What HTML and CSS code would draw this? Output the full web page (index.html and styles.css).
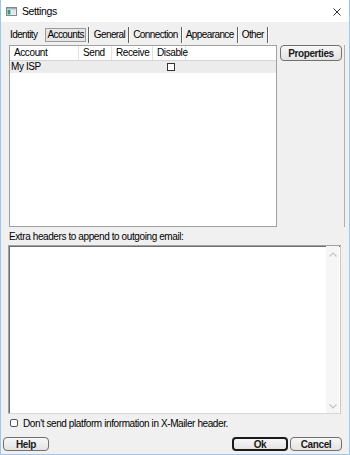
FILE: index.html
```html
<!DOCTYPE html>
<html lang="en">
<head>
  <meta charset="UTF-8" />
  <title>Settings</title>
  <link rel="stylesheet" href="styles.css">
</head>
<body>

<div class="window">
  <!-- Title bar -->
  <div class="titlebar">
    <svg class="app-icon" width="11" height="9" viewBox="0 0 11 9">
      <rect x="0.5" y="0.5" width="10" height="8" fill="#f4f6f8" stroke="#7d8a94"/>
      <rect x="1" y="1" width="9" height="1.5" fill="#9fb1bf"/>
      <rect x="1.5" y="3" width="3" height="4.5" fill="#3c9a72"/>
      <rect x="5.5" y="3" width="4" height="4.5" fill="#dfe6ea"/>
    </svg>
    <span class="title">Settings</span>
    <svg class="close" width="8" height="8" viewBox="0 0 8 8">
      <path d="M0.5 0.5 L7.5 7.5 M7.5 0.5 L0.5 7.5" stroke="#333333" stroke-width="1"/>
    </svg>
  </div>

  <div class="client">
    <!-- Tabs -->
    <div class="tabs">
      <span class="tab plain">Identity</span>
      <span class="tab active">Accounts</span>
      <span class="tab">General</span>
      <span class="tab">Connection</span>
      <span class="tab">Appearance</span>
      <span class="tab">Other</span>
    </div>

    <!-- Accounts -->
    <div class="accounts">
      <div class="listbox">
        <div class="list-head">
          <span class="col col-account">Account</span>
          <span class="col col-send">Send</span>
          <span class="col col-receive">Receive</span>
          <span class="col col-disable">Disable</span>
        </div>
        <div class="list-row">
          <span class="col col-account">My ISP</span>
          <span class="col col-send"></span>
          <span class="col col-receive"></span>
          <span class="col col-disable"><span class="check"></span></span>
        </div>
      </div>
      <div class="side">
        <button class="btn btn-props">Properties</button>
      </div>
    </div>

    <div class="label">Extra headers to append to outgoing email:</div>
    <div class="memo">
      <div class="memo-text"></div>
      <div class="scrollbar">
        <svg width="8" height="5" viewBox="0 0 8 5"><path d="M0.5 4.5 L4 1 L7.5 4.5" fill="none" stroke="#c4c4c4" stroke-width="1.2"/></svg>
        <svg width="8" height="5" viewBox="0 0 8 5"><path d="M0.5 0.5 L4 4 L7.5 0.5" fill="none" stroke="#c4c4c4" stroke-width="1.2"/></svg>
      </div>
    </div>

    <label class="option">
      <span class="option-box"></span>
      Don't send platform information in X-Mailer header.
    </label>

    <div class="buttons">
      <button class="btn btn-help">Help</button>
      <span class="spacer"></span>
      <button class="btn btn-ok">Ok</button>
      <button class="btn btn-cancel">Cancel</button>
    </div>
  </div>
</div>

</body>
</html>
```

FILE: styles.css
```css
/* General */
body {
  margin: 0;
  font-family: "Liberation Sans", Arial, sans-serif;
  font-size: 10px;
  letter-spacing: -0.4px;
  color: #000000;
  background-color: #ffffff;
}

.window {
  width: 350px;
  height: 455px;
  box-sizing: border-box;
  border: 1px solid #9ec5ea;
  border-top: none;
  display: flex;
  flex-direction: column;
  background-color: #f0f0f0;
}

/* Title bar */
.titlebar {
  height: 22px;
  background-color: #ffffff;
  display: flex;
  align-items: center;
  padding: 0 8px 0 5px;
  flex-shrink: 0;
}

.app-icon {
  margin-right: 5px;
  margin-top: 1px;
}

.title {
  font-size: 10.5px;
  letter-spacing: -0.4px;
  flex: 1;
}

.close {
  margin-top: 2px;
}

/* Client area */
.client {
  flex: 1;
  display: flex;
  flex-direction: column;
  padding: 0 7px 0 2px;
}

/* Tabs */
.tabs {
  display: flex;
  height: 16px;
  margin-top: 5px;
  align-items: center;
  padding-left: 7px;
  letter-spacing: -0.6px;
}

.tab {
  height: 16px;
  line-height: 15px;
  padding-right: 3px;
  margin-right: 4px;
  border-right: 1px solid #5f5f5f;
  box-shadow: 1px 0 0 #ffffff;
  box-sizing: border-box;
}

.tab.plain {
  border-right: none;
  box-shadow: none;
  margin-right: 5px;
}

.tab.active {
  height: 14px;
  line-height: 12px;
  padding-left: 1px;
  padding-right: 1px;
  margin-right: 8px;
  border: 1px solid #9b9b9b;
  background-color: #e6e6e6;
  box-shadow: none;
  position: relative;
}

.tab.active::after {
  content: "";
  position: absolute;
  right: -4px;
  top: -2px;
  height: 16px;
  border-right: 1px solid #5f5f5f;
  box-shadow: 1px 0 0 #ffffff;
}

/* Accounts list */
.accounts {
  display: flex;
  height: 182px;
  margin-top: 2px;
  margin-right: -3px;
  padding-left: 6px;
}

.listbox {
  width: 268px;
  background-color: #ffffff;
  border: 1px solid #a0a0a0;
  box-sizing: border-box;
}

.list-head,
.list-row {
  display: flex;
}

.list-head {
  height: 15px;
  line-height: 14px;
  border-bottom: 1px solid #d5d5d5;
  box-sizing: border-box;
}

.list-head .col {
  border-right: 1px solid #e0e0e0;
  padding-left: 4px;
}

.list-row {
  height: 12px;
  line-height: 12px;
  background-color: #ececec;
}

.list-row .col-account {
  padding-left: 1px;
}

.col {
  box-sizing: border-box;
  flex-shrink: 0;
}

.col-account { width: 69px; }
.col-send { width: 33px; }
.col-receive { width: 41px; }
.col-disable { width: 33px; }

.list-row .col-disable {
  text-align: center;
}

.check {
  display: inline-block;
  width: 6px;
  height: 6px;
  border: 1px solid #333333;
  background-color: #ffffff;
  vertical-align: -1px;
  margin-left: 3px;
}

.side {
  width: 62px;
  margin-left: 3px;
  padding-right: 2px;
  border-right: 1px solid #b0b0b0;
}

/* Buttons */
.btn {
  font-family: "Liberation Sans", Arial, sans-serif;
  font-size: 10px;
  letter-spacing: -0.4px;
  font-weight: bold;
  background: linear-gradient(#f7f7f7, #e3e3e3);
  border: 1px solid #6f6f6f;
  border-radius: 4px;
  height: 14px;
  padding: 0;
  line-height: 11px;
  color: #1a1a1a;
}

.btn-props {
  width: 62px;
  height: 16px;
}

/* Extra headers */
.label {
  margin-top: 4px;
  padding-left: 6px;
  height: 12px;
  line-height: 12px;
}

.memo {
  margin: 2px 1px 0 5px;
  height: 169px;
  display: flex;
  background-color: #ffffff;
  border: 1px solid #a0a0a0;
  border-right-color: #c8c8c8;
  border-bottom-color: #d8d8d8;
  box-shadow: inset 1px 1px 0 #6e6e6e;
  box-sizing: border-box;
}

.memo-text {
  flex: 1;
}

.scrollbar {
  width: 13px;
  margin-right: 1px;
  background-color: #f6f6f6;
  display: flex;
  flex-direction: column;
  justify-content: space-between;
  align-items: center;
  padding: 6px 0 4px;
}

.option {
  display: flex;
  align-items: center;
  margin-top: 2px;
  padding-left: 7px;
  height: 14px;
}

.option-box {
  width: 6px;
  height: 6px;
  border: 1px solid #555555;
  border-radius: 2px;
  background-color: #ffffff;
  margin-right: 5px;
}

.buttons {
  display: flex;
  margin-top: 7px;
}

.spacer {
  flex: 1;
}

.btn-help {
  width: 46px;
}

.btn-ok {
  width: 56px;
  border: 2px solid #1a1a1a;
}

.btn-cancel {
  width: 52px;
  margin-left: 2px;
}
```
